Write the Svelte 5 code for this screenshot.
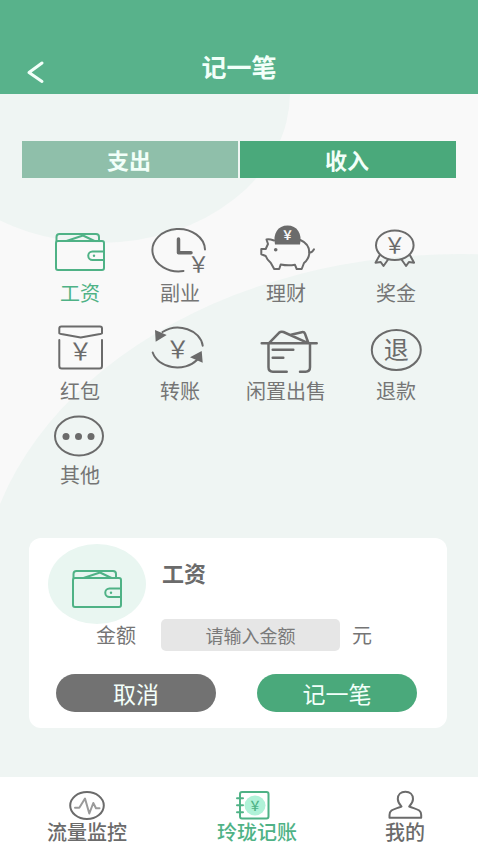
<script>
  const categories = ['工资', '副业', '理财', '奖金', '红包', '转账', '闲置出售', '退款', '其他'];
  const tabs = ['支出', '收入'];

  let selected = $state('工资');
  let tab = $state('收入');
  let amount = $state('');
</script>

{#snippet wallet()}
  <rect x="8" y="22" width="48" height="29" rx="2" />
  <path d="M8.500 22V18q0-3 3-3H48q3 0 3 3v4M18.500 22 35 16.500 46.500 22" />
  <path d="M56 32.500H44.500a4.200 4.200 0 0 0 0 8.500H56" />
  <circle class="solid" cx="46" cy="36.800" r="1.200" />
{/snippet}

{#snippet categoryIcon(name)}
  {#if name === '工资'}
    {@render wallet()}
  {:else if name === '副业'}
    <path d="M57 30.500A26.300 21.200 0 1 0 35.500 52" />
    <path d="M30.500 20v13.800H43" stroke-width="3.500" />
    <text x="50.500" y="53" font-size="22">&#xFFE5;</text>
  {:else if name === '理财'}
    <path d="M20 21.500c-3-1-5.500-1.500-7.500-1l1.500 4.500-2.300 5H7.300v5.300l4.400 1.700c1 3 3 5 5 6.700l3.500 6.300h5l1.500-4.500q7.300 1.500 14.300.3l1.700 4.200h5l2.300-6c3-2.500 5.300-6 5.300-10.500 0-5.500-3-10-9-12.500" />
    <path d="M55.300 33.300c2 .5 3.500-.8 4.700-3" />
    <path class="solid" d="M21 25.500C18.500 14.500 24 6.500 33.500 6.500S48.500 14.500 46 25.500Z" />
    <circle class="solid" cx="21.700" cy="30.700" r="1.800" />
    <text class="light" x="33.500" y="20.500" font-size="12">&#xFFE5;</text>
  {:else if name === '奖金'}
    <ellipse cx="30.800" cy="26.200" rx="18.800" ry="14.800" />
    <path d="M15.500 36.500l-4 7.200 5.200-.7 2.800 4 4.600-6.500M46.100 36.500l4 7.200-5.200-.7-2.800 4-4.600-6.500" />
    <text x="30.800" y="34" font-size="22">&#xFFE5;</text>
  {:else if name === '红包'}
    <path d="M13.300 9.500H52q2 0 2 2v4.800l-2 .7-19.300 3.500L13.300 17l-2-.7v-4.800q0-2 2-2Z" />
    <path d="M11.300 23v26q0 2.500 2.500 2.500h37.700q2.500 0 2.500-2.500V23" />
    <text x="32.600" y="42.500" font-size="24">&#xFFE5;</text>
  {:else if name === '转账'}
    <path d="M14.500 15A25 20.500 0 0 1 54.700 28.700M4.700 35.500A25.500 20.500 0 0 0 49 43" />
    <path class="solid" d="M7 13l11.700 5-11 6.700ZM53.700 34 42 40.300l12.700 5.400Z" />
    <text x="29.800" y="40.500" font-size="24">&#xFFE5;</text>
  {:else if name === '闲置出售'}
    <g stroke-width="2.500">
      <path d="M7.700 26.300h55M14.500 26.300v24q0 4.400 4.400 4.400h13.800M56 26.300v24q0 4.400-4.400 4.400H46" />
      <path d="M18.700 32.700h20.600M18.700 40.700h10.600" />
      <path d="M15.500 25.700 25 15.800q2-1.800 4.500-.8L53 25.700M37 17.700l10.700-2.500q2.500-.5 3.200 1.300l3.400 9.200" />
    </g>
  {:else if name === '退款'}
    <ellipse cx="32.300" cy="33" rx="24.500" ry="20" />
    <text x="32.300" y="42" font-size="25">退</text>
  {:else}
    <ellipse cx="31" cy="21" rx="24" ry="19.500" />
    <g class="solid">
      <circle cx="18" cy="21.500" r="3.500" />
      <circle cx="30.500" cy="21.500" r="3.500" />
      <circle cx="43" cy="21.500" r="3.500" />
    </g>
  {/if}
{/snippet}

<div class="app">
  <header>
    <button class="back" aria-label="返回">
      <svg width="20" height="24" viewBox="0 0 20 24">
        <path d="M16 3 3 12.500 16 21.500" />
      </svg>
    </button>
    <h1>记一笔</h1>
  </header>

  <main>
    <svg class="backdrop" viewBox="0 94 478 683" preserveAspectRatio="none" aria-hidden="true">
      <ellipse cx="100" cy="93" rx="190" ry="150" />
      <path d="M-20 777V604A480 350 0 0 1 940 604V777Z" />
    </svg>

    <div class="tabs">
      {#each tabs as name}
        <button class:active={tab === name} aria-pressed={tab === name} onclick={() => (tab = name)}>{name}</button>
      {/each}
    </div>

    <div class="categories">
      {#each categories as name}
        {@const height = name === '其他' ? 42 : 56}
        <button class:active={selected === name} aria-pressed={selected === name} onclick={() => (selected = name)}>
          <svg width="64" {height} viewBox="0 0 64 {height}" aria-hidden="true">
            {@render categoryIcon(name)}
          </svg>
          <span>{name}</span>
        </button>
      {/each}
    </div>

    <form class="card" onsubmit={(e) => e.preventDefault()}>
      <div class="heading">
        <div class="badge">
          <svg width="64" height="56" viewBox="0 0 64 56" aria-hidden="true">
            {@render categoryIcon(selected)}
          </svg>
        </div>
        <h2>{selected}</h2>
      </div>
      <div class="field">
        <label for="amount">金额</label>
        <input id="amount" type="text" inputmode="decimal" placeholder="请输入金额" bind:value={amount} />
        <span>元</span>
      </div>
      <div class="actions">
        <button type="button" class="cancel" onclick={() => (amount = '')}>取消</button>
        <button type="submit" class="save">记一笔</button>
      </div>
    </form>
  </main>

  <nav>
    <a href="#monitor">
      <svg width="40" height="31" viewBox="0 0 40 31" aria-hidden="true">
        <ellipse cx="20" cy="16.500" rx="16.800" ry="13.500" />
        <path class="pulse" d="M8 18.700h4.300L18 9.500l4.300 15 4-10.500 2.700 5.300h3.500" />
      </svg>
      <span>流量监控</span>
    </a>
    <a href="#ledger" class="active" aria-current="page">
      <svg width="40" height="31" viewBox="0 0 40 31" aria-hidden="true">
        <ellipse class="mint" cx="18" cy="16.500" rx="10.500" ry="10" />
        <rect x="3" y="3" width="28.500" height="26.500" rx="2" />
        <path d="M0 9.300h6M0 16.300h6M0 23.300h6" />
        <text x="18" y="21" font-size="13">&#xFFE5;</text>
      </svg>
      <span>玲珑记账</span>
    </a>
    <a href="#mine">
      <svg width="40" height="31" viewBox="0 0 40 31" aria-hidden="true">
        <path d="M16.500 17.500C9 20.500 4.500 20.500 4.500 26v2.700h31.700V26c0-5.500-4.500-5.500-12-8.500 2-2.200 3.800-4 3.800-7.500 0-4.500-3-7.200-7.600-7.200s-7.600 2.700-7.600 7.200c0 3.500 1.700 5.300 3.700 7.500Z" />
      </svg>
      <span>我的</span>
    </a>
  </nav>
</div>

<style>
  .app {
    display: flex;
    flex-direction: column;
    min-height: 100vh;
    background: #f9f9f9;
    color: #6b6b6b;
    font-family: 'Noto Sans CJK SC', sans-serif;
    font-size: 20px;
    line-height: 24px;
  }

  button,
  input {
    margin: 0;
    padding: 0;
    border: 0;
    background: none;
    color: inherit;
    font: inherit;
  }

  button {
    cursor: pointer;
  }

  h1,
  h2 {
    margin: 0;
    font-weight: 700;
  }

  svg {
    display: block;
    overflow: visible;
    fill: none;
    stroke: currentColor;
    stroke-width: 2;
    stroke-linecap: round;
    stroke-linejoin: round;
  }

  svg text {
    fill: currentColor;
    stroke: none;
    text-anchor: middle;
  }

  .solid {
    fill: currentColor;
    stroke: none;
  }

  svg .light {
    fill: #f9f9f9;
    font-weight: 700;
  }

  header {
    display: grid;
    grid-template-columns: 1fr auto 1fr;
    align-items: end;
    padding: 54px 26px 10px;
    background: #58b28b;
    color: #f2fff9;
  }

  h1 {
    padding-bottom: 6px;
    font-size: 25px;
    line-height: 24px;
  }

  .back {
    justify-self: start;
  }

  .back svg {
    stroke-width: 3;
  }

  main {
    position: relative;
    flex: 1;
    padding: 47px 0 49px;
    overflow: hidden;
  }

  .backdrop {
    position: absolute;
    inset: 0;
    width: 100%;
    height: 100%;
    overflow: hidden;
    fill: #eff5f3;
    stroke: none;
  }

  .tabs,
  .categories,
  .card {
    position: relative;
  }

  .tabs {
    display: grid;
    grid-template-columns: 1fr 1fr;
    gap: 2px;
    margin: 0 22px;
  }

  .tabs button {
    height: 37px;
    padding: 0 2px 2px 0;
    background: #8fbfaa;
    color: #f2fff9;
    font-size: 22px;
    font-weight: 700;
  }

  .tabs .active {
    background: #4aa97b;
  }

  .categories {
    display: grid;
    grid-template-columns: 25fr 25fr 28fr 27fr;
    row-gap: 12px;
    margin: 41px 28px 51px 30px;
  }

  .categories button {
    display: flex;
    flex-direction: column;
    align-items: center;
    gap: 6px;
  }

  .categories span,
  .field {
    color: #757575;
  }

  .categories .active,
  .categories .active span,
  .badge {
    color: #4fb286;
  }

  .card {
    margin: 0 31px 0 29px;
    padding: 6px 0 16px;
    border-radius: 12px;
    background: #fff;
  }

  .heading {
    display: flex;
    gap: 16px;
    padding-left: 19px;
  }

  .badge {
    display: grid;
    place-items: center;
    width: 98px;
    height: 80px;
    border-radius: 50%;
    background: #e9f6f1;
  }

  h2 {
    padding-top: 16px;
    font-size: 22px;
  }

  .field {
    display: flex;
    align-items: center;
    margin-top: -5px;
    padding: 0 75px 0 67px;
  }

  .field input {
    flex: 1;
    min-width: 0;
    height: 32px;
    margin: 0 12px 0 25px;
    border-radius: 5px;
    background: #e6e6e6;
    font-size: 18px;
    text-align: center;
  }

  .field input::placeholder {
    color: #7a7a7a;
    opacity: 1;
  }

  .actions {
    display: grid;
    grid-template-columns: 1fr 1fr;
    gap: 41px;
    margin-top: 23px;
    padding: 0 30px 0 27px;
  }

  .actions button {
    height: 38px;
    border-radius: 20px;
    color: #f2fff9;
    font-size: 23px;
  }

  .cancel {
    background: #727272;
  }

  .save {
    background: #4aa97b;
  }

  nav {
    display: grid;
    grid-template-columns: 174fr 166fr 130fr;
    padding: 12px 8px 6px 0;
    background: #fff;
    font-weight: 500;
  }

  nav a {
    display: flex;
    flex-direction: column;
    align-items: center;
    color: inherit;
    text-decoration: none;
  }

  nav .active {
    color: #4fb286;
  }

  .mint {
    fill: #b0f2d8;
    stroke: none;
  }

  .pulse {
    stroke: #9a9a9a;
  }
</style>
